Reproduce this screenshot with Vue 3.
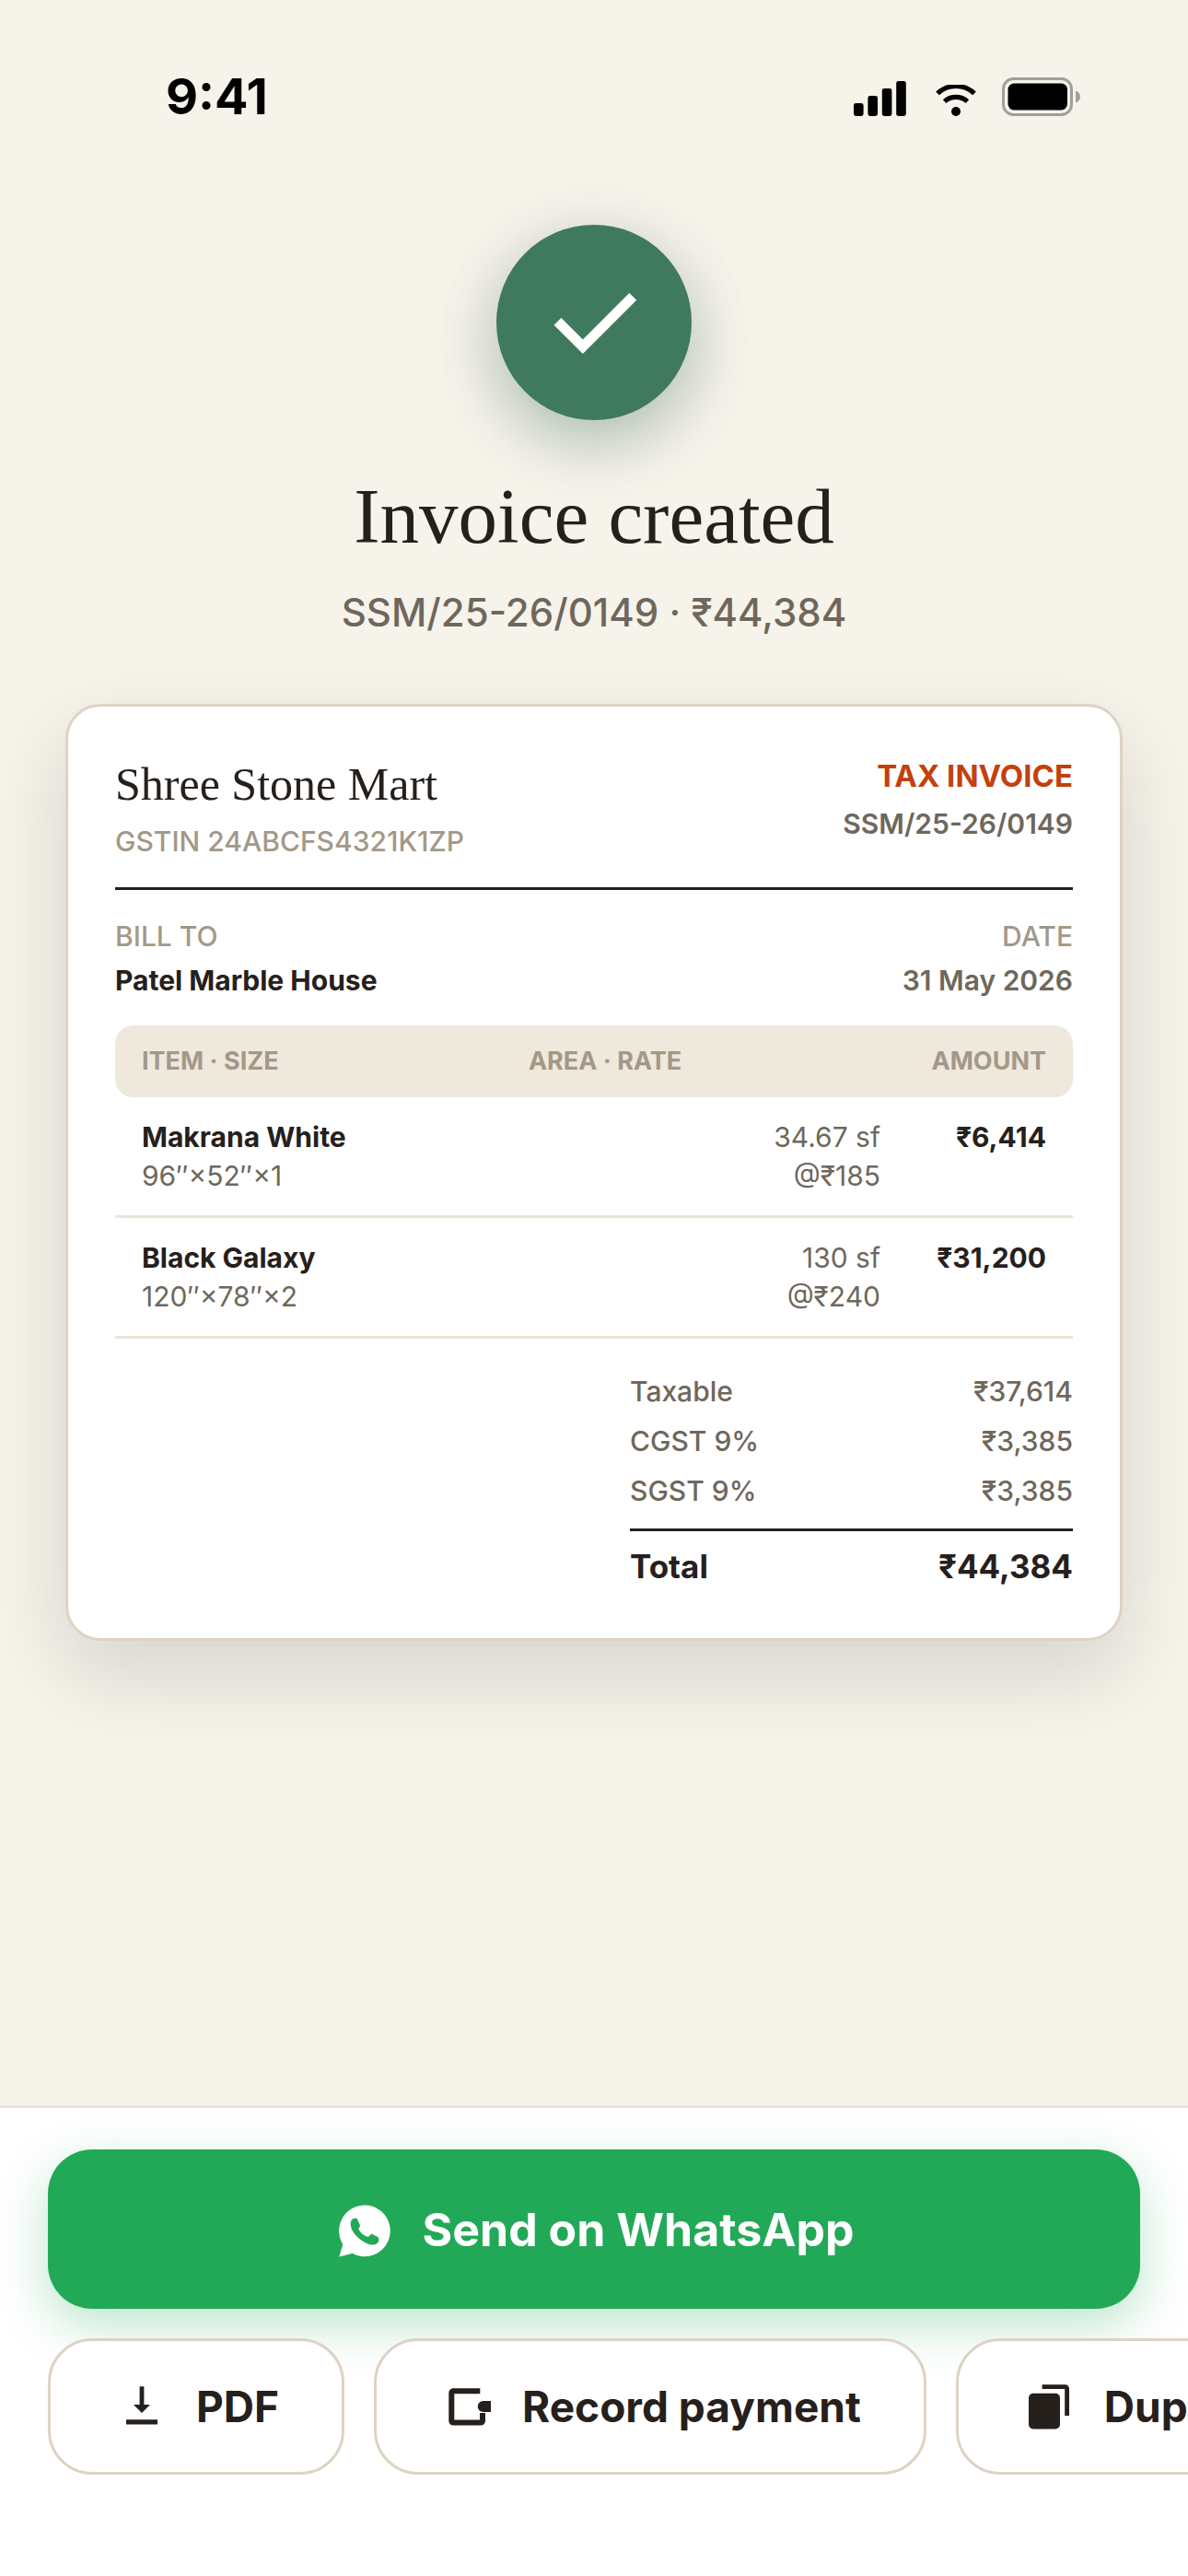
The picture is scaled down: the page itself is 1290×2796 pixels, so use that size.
<script setup>
const invoice = {
  number: 'SSM/25-26/0149',
  total: '₹44,384',
  seller: 'Shree Stone Mart',
  gstin: 'GSTIN 24ABCFS4321K1ZP',
  buyer: 'Patel Marble House',
  date: '31 May 2026',
}

const items = [
  { name: 'Makrana White', size: '96″×52″×1', area: '34.67 sf', rate: '@₹185', amount: '₹6,414' },
  { name: 'Black Galaxy', size: '120″×78″×2', area: '130 sf', rate: '@₹240', amount: '₹31,200' },
]

const taxes = [
  { label: 'Taxable', value: '₹37,614' },
  { label: 'CGST 9%', value: '₹3,385' },
  { label: 'SGST 9%', value: '₹3,385' },
]
</script>

<template>
  <div class="screen">
    <header class="status">
      <span class="clock">9:41</span>
      <div class="indicators">
        <svg width="57" height="38" viewBox="0 0 57 38" aria-hidden="true">
          <rect x="0" y="24" width="10.6" height="14" rx="2.4" />
          <rect x="15.4" y="16" width="10.6" height="22" rx="2.4" />
          <rect x="30.8" y="8" width="10.6" height="30" rx="2.4" />
          <rect x="46.2" y="0" width="10.6" height="38" rx="2.4" />
        </svg>
        <svg width="48" height="34" viewBox="0 0 48 34" aria-hidden="true">
          <path d="M6 9.400a29 29 0 0 1 40 0M13.600 18.200a18.400 18.400 0 0 1 24.800 0" fill="none" stroke="#000" stroke-width="5.2" />
          <circle cx="26" cy="29" r="5" />
        </svg>
        <svg width="86" height="42" viewBox="0 0 86 42" aria-hidden="true">
          <rect x="1.5" y="1.5" width="74" height="39" rx="11" fill="none" stroke="#a29f99" stroke-width="3" />
          <rect x="6.5" y="6.5" width="64.5" height="29" rx="6.5" />
          <path d="M80 14.500c3 1 5 3.500 5 6.500s-2 5.500-5 6.500z" fill="#a29f99" />
        </svg>
      </div>
    </header>

    <main class="content">
      <section class="hero">
        <div class="badge">
          <svg width="132" height="132" viewBox="0 0 24 24" aria-hidden="true">
            <path d="m9.800 18.200-5.700-5.700 1.425-1.425L9.800 15.350l9.175-9.175L20.400 7.600z" fill="#fff" />
          </svg>
        </div>
        <h1 class="title">Invoice created</h1>
        <p class="subtitle">{{ invoice.number }} · {{ invoice.total }}</p>
      </section>

      <article class="card">
        <div class="card-head">
          <div>
            <h2 class="seller">{{ invoice.seller }}</h2>
            <p class="gstin">{{ invoice.gstin }}</p>
          </div>
          <div class="right">
            <p class="doc-type">TAX INVOICE</p>
            <p class="doc-number">{{ invoice.number }}</p>
          </div>
        </div>

        <div class="parties">
          <div>
            <p class="label">BILL TO</p>
            <p class="buyer">{{ invoice.buyer }}</p>
          </div>
          <div class="right">
            <p class="label">DATE</p>
            <p class="date">{{ invoice.date }}</p>
          </div>
        </div>

        <table class="items">
          <thead>
            <tr>
              <th scope="col">ITEM · SIZE</th>
              <th scope="col">AREA · RATE</th>
              <th scope="col">AMOUNT</th>
            </tr>
          </thead>
          <tbody>
            <tr v-for="item in items" :key="item.name">
              <td class="item"><strong>{{ item.name }}</strong><br />{{ item.size }}</td>
              <td class="area">{{ item.area }}<br />{{ item.rate }}</td>
              <td class="amount">{{ item.amount }}</td>
            </tr>
          </tbody>
        </table>

        <dl class="totals">
          <div v-for="tax in taxes" :key="tax.label" class="line">
            <dt>{{ tax.label }}</dt>
            <dd>{{ tax.value }}</dd>
          </div>
          <div class="line grand">
            <dt>Total</dt>
            <dd>{{ invoice.total }}</dd>
          </div>
        </dl>
      </article>
    </main>

    <footer class="actions">
      <button type="button" class="send">
        <svg width="66" height="66" viewBox="0 0 66 66" aria-hidden="true">
          <path d="M5.300 62.500 9.300 49A27.800 27.800 0 1 1 19.700 58.800z" fill="#fff" />
          <path d="M19.500 21.800c1.500-1.200 3.700-1.300 5.200-.8l3.300 7.500c.3 1.300-1.700 2.500-1.700 4 1.700 3.500 6 7.500 10.700 8.500l3.300-3.500 7.400 3.800c.8 1.700.6 3.500.3 4.900-1.500 2.200-3.800 3.300-6 3.300-3.500 0-7-1.300-10-3.300-4.700-2.700-9-6.700-11.700-11-1.500-2.500-2.600-5.400-2.600-8.200 0-2 .8-4 1.800-5.200z" fill="#22a957" />
        </svg>
        <span>Send on WhatsApp</span>
      </button>
      <div class="more">
        <button type="button" class="option">
          <svg width="54" height="54" viewBox="0 0 54 54" aria-hidden="true">
            <path d="M24.600 5.300h4.800V25H36l-9 9-9-9h6.600zM10 41.300h34v5.200H10z" />
          </svg>
          <span>PDF</span>
        </button>
        <button type="button" class="option">
          <svg width="54" height="54" viewBox="0 0 54 54" aria-hidden="true">
            <path d="M40.300 10.300H11.300a2 2 0 0 0-2 2V42.600a2 2 0 0 0 2 2H41a2 2 0 0 0 2-2V34" fill="none" stroke="#26201c" stroke-width="6" />
            <path d="M52 21h-8.300a6 6 0 0 0 0 12H52z" />
          </svg>
          <span>Record payment</span>
        </button>
        <button type="button" class="option">
          <svg width="54" height="54" viewBox="0 0 54 54" aria-hidden="true">
            <rect x="4" y="12.800" width="34" height="38.700" rx="5" />
            <path d="M18.600 5.600H43.600a2 2 0 0 1 2 2V37" fill="none" stroke="#26201c" stroke-width="4.800" />
          </svg>
          <span>Duplicate</span>
        </button>
      </div>
    </footer>
  </div>
</template>

<style>
body {
  margin: 0;
  background: #f6f3eb;
}
</style>

<style scoped>
.screen {
  display: flex;
  flex-direction: column;
  min-height: 100vh;
  overflow: hidden;
  background: #f6f3eb;
  color: #26201c;
  font-family: Inter, "Liberation Sans", sans-serif;
}

h1, h2, p, dl, dd {
  margin: 0;
}

svg {
  display: block;
  flex: none;
}

.status {
  display: flex;
  align-items: center;
  justify-content: space-between;
  height: 50px;
  padding: 80px 116px 0 180px;
  color: #000;
}

.clock {
  font-size: 54px;
  font-weight: 700;
  line-height: 50px;
}

.indicators {
  display: flex;
  align-items: flex-end;
  gap: 28px;
}

.content {
  flex: 1;
  padding: 114px 71px 72px;
}

.hero {
  text-align: center;
}

.badge {
  display: flex;
  align-items: center;
  justify-content: center;
  width: 212px;
  height: 212px;
  margin: 0 auto 56px;
  border-radius: 50%;
  background: #407a5e;
  box-shadow: 0 16px 96px rgba(26, 32, 40, 0.1), 0 24px 60px rgba(64, 122, 94, 0.3);
}

.title {
  font-family: "Liberation Serif", serif;
  font-size: 85px;
  font-weight: 400;
  line-height: 96px;
}

.subtitle {
  margin-top: 30px;
  color: #6f675b;
  font-size: 42px;
  font-weight: 500;
  line-height: 54px;
}

.card {
  margin-top: 72px;
  padding: 51px;
  border: 3px solid #ddd3c3;
  border-radius: 38px;
  background: #fff;
  box-shadow: 0 36px 90px rgba(26, 22, 18, 0.14);
  font-size: 30px;
  line-height: 42px;
}

.card-head,
.parties {
  display: flex;
  justify-content: space-between;
}

.card-head {
  padding-bottom: 29px;
  border-bottom: 3px solid #26201c;
}

.right {
  text-align: right;
}

.seller {
  font-family: "Liberation Serif", serif;
  font-size: 50px;
  font-weight: 400;
  line-height: 66px;
}

.gstin {
  margin-top: 8px;
  color: #a39888;
  font-weight: 500;
}

.doc-type {
  color: #c2410c;
  font-size: 33px;
  font-weight: 700;
  line-height: 48px;
}

.doc-number {
  margin-top: 7px;
  color: #6f675b;
  font-weight: 600;
}

.parties {
  margin: 29px 0 28px;
}

.label {
  color: #a39888;
  font-weight: 500;
}

.buyer,
.date {
  margin-top: 6px;
  font-weight: 700;
}

.date {
  color: #6f675b;
  font-weight: 600;
}

.items,
.items thead,
.items tbody {
  display: block;
}

.items tr {
  display: flex;
  padding: 0 29px;
}

.items th,
.items td {
  padding: 0;
}

.items thead tr {
  justify-content: space-between;
  border-radius: 20px;
  background: #efe8dc;
  color: #a39888;
}

.items th {
  font-size: 27px;
  font-weight: 700;
  line-height: 78px;
}

.items tbody tr {
  padding-top: 22px;
  padding-bottom: 22px;
  border-bottom: 3px solid #ece4d8;
}

.item {
  flex: 1;
  color: #6f675b;
}

.item strong {
  color: #26201c;
  font-weight: 700;
}

.area {
  color: #6f675b;
  text-align: right;
}

.amount {
  width: 180px;
  font-weight: 700;
  text-align: right;
}

.totals {
  display: flex;
  flex-direction: column;
  gap: 12px;
  width: 481px;
  margin: 36px 0 0 auto;
}

.line {
  display: flex;
  justify-content: space-between;
  color: #6f675b;
  font-weight: 500;
}

.grand {
  margin-top: 8px;
  padding-top: 14px;
  padding-bottom: 3px;
  border-top: 3px solid #26201c;
  color: #26201c;
  font-size: 35px;
  font-weight: 700;
  line-height: 48px;
}

.actions {
  display: flex;
  flex-direction: column;
  gap: 32px;
  padding: 45px 52px 110px;
  border-top: 3px solid #ebe3d8;
  background: #fff;
}

button {
  display: flex;
  align-items: center;
  justify-content: center;
  gap: 30px;
  box-sizing: border-box;
  border: 0;
  border-radius: 48px;
  font-family: inherit;
  font-weight: 700;
  white-space: nowrap;
}

.send {
  height: 173px;
  background: #22a957;
  box-shadow: 0 18px 54px rgba(34, 169, 87, 0.3);
  color: #fff;
  font-size: 50px;
}

/* The row scrolls sideways and bleeds to the screen edges. */
.more {
  display: flex;
  gap: 32px;
  margin: 0 -52px;
  padding: 0 52px;
  overflow-x: auto;
  scrollbar-width: none;
}

.option {
  flex: none;
  gap: 32px;
  height: 148px;
  padding: 0 68px 0 72px;
  border: 3px solid #ddd3c3;
  background: #fff;
  color: #26201c;
  font-size: 46px;
}

.option svg {
  fill: #26201c;
}
</style>
